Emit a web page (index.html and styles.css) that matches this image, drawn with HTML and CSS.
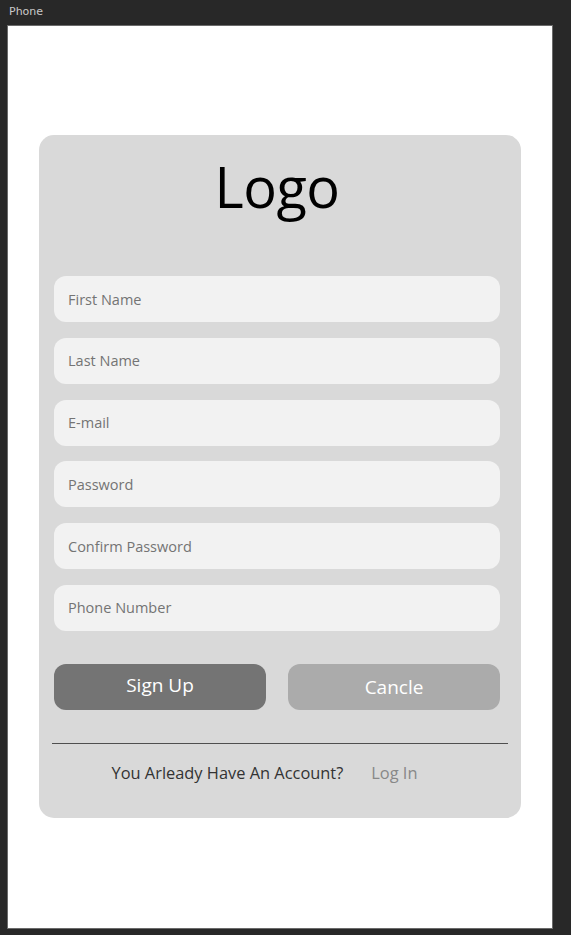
FILE: index.html
```html
<!DOCTYPE html>
<html>
<head>
<meta charset="utf-8">
<link rel="stylesheet" href="styles.css">
</head>
<body>
<div class="titlebar">Phone</div>
<div class="artboard">
  <div class="card">
    <div class="logo">Logo</div>
    <div class="fields">
      <div class="field">First Name</div>
      <div class="field">Last Name</div>
      <div class="field">E-mail</div>
      <div class="field">Password</div>
      <div class="field">Confirm Password</div>
      <div class="field">Phone Number</div>
    </div>
    <div class="actions">
      <div class="btn btn-primary">Sign Up</div>
      <div class="btn btn-secondary">Cancle</div>
    </div>
    <div class="divider"></div>
    <div class="footer">
      <span class="question">You Arleady Have An Account?</span>
      <span class="login">Log In</span>
    </div>
  </div>
</div>
</body>
</html>
```
FILE: styles.css
```css
* { box-sizing: border-box; }
html, body { margin: 0; padding: 0; }
body {
  background: #282828;
  width: 571px;
  height: 935px;
  overflow: hidden;
  font-family: "Open Sans", "Noto Sans", sans-serif;
}
.titlebar {
  height: 25px;
  padding: 5px 0 0 9px;
  font-size: 11px;
  line-height: 14px;
  color: #c8c8c8;
  font-family: "DejaVu Sans", sans-serif;
}
.artboard {
  margin-left: 7px;
  width: 546px;
  height: 904px;
  background: #ffffff;
  border: 1px solid #6a6a6a;
  padding-top: 109px;
  padding-left: 31px;
}
.card {
  width: 482px;
  height: 683px;
  background: #d9d9d9;
  border-radius: 15px;
  padding: 0 0 0 15px;
}
.logo {
  width: 446px;
  text-align: center;
  font-size: 56px;
  line-height: 60px;
  padding-top: 21px;
  height: 141px;
  color: #000;
  letter-spacing: -0.5px;
}
.fields {
  display: flex;
  flex-direction: column;
  gap: 15.8px;
  width: 446px;
}
.field {
  height: 46px;
  background: #f2f2f2;
  border-radius: 12px;
  padding-left: 14px;
  display: flex;
  align-items: center;
  font-size: 14.5px;
  color: #747474;
}
.actions {
  display: flex;
  gap: 22px;
  width: 446px;
  margin-top: 33px;
}
.btn {
  flex: 1;
  height: 46px;
  border-radius: 12px;
  display: flex;
  align-items: center;
  justify-content: center;
  color: #ffffff;
  font-size: 19px;
}
.btn-primary { background: #747474; padding-bottom: 3px; }
.btn-secondary { background: #ababab; }
.divider {
  width: 456px;
  margin-left: -2px;
  margin-top: 33px;
  height: 1px;
  background: #4f4f4f;
}
.footer {
  width: 446px;
  display: flex;
  justify-content: center;
  gap: 28px;
  margin-top: 18px;
  font-size: 16.4px;
  line-height: 22px;
  padding-right: 25px;
}
.question { color: #333333; }
.login { color: #888888; }
```
